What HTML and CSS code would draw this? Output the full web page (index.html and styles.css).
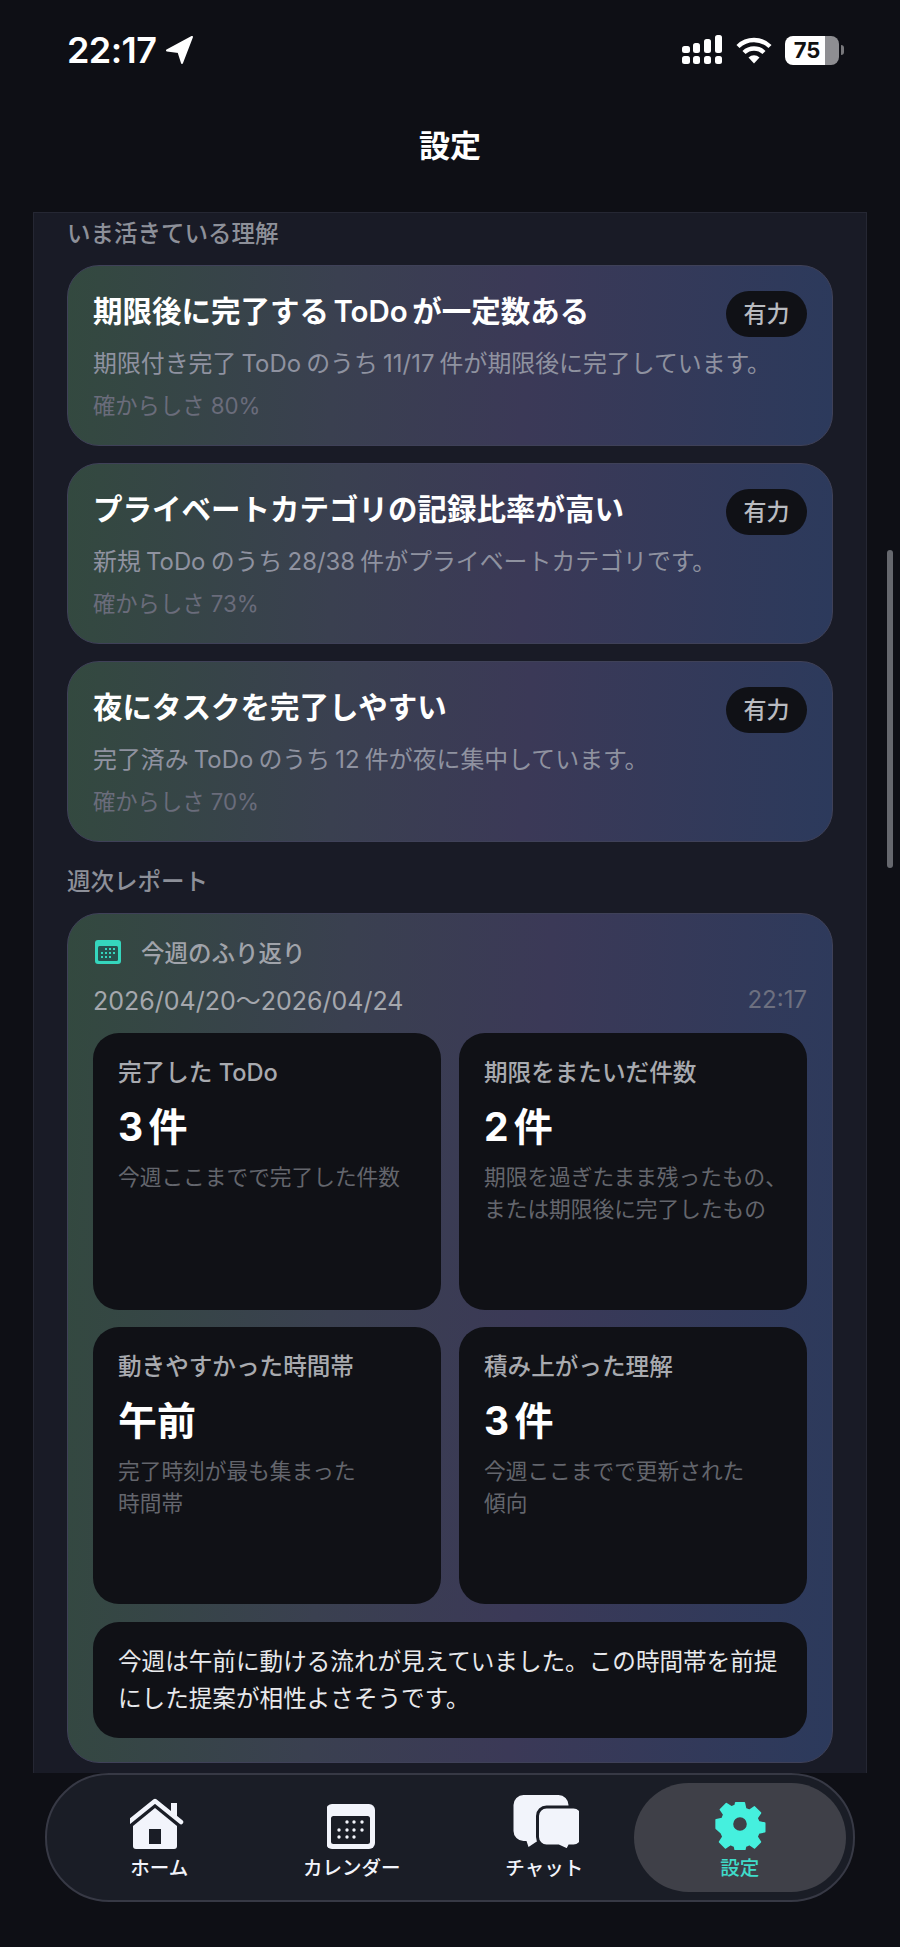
FILE: index.html
```html
<!DOCTYPE html>
<html lang="ja">
  <head>
    <meta charset="utf-8" />
    <title>設定</title>
    <link rel="stylesheet" href="styles.css">
  </head>
  <body>
    <div class="phone">
      <div class="status-bar">
        <div class="status-left">
          <span class="clock">22:17</span>
          <svg class="arrow" viewBox="0 0 30 30"><path d="M28 2 3 15.500l11.500 1.500L18 28z" fill="#fff" stroke="#fff" stroke-width="2" stroke-linejoin="round"/></svg>
        </div>
        <div class="status-right">
          <svg class="signal" viewBox="0 0 42 30" fill="#fff">
            <rect x="1" y="11" width="8" height="7" rx="2.5"/>
            <rect x="12" y="8" width="7" height="10" rx="2.5"/>
            <rect x="23" y="4" width="7" height="14" rx="2.5"/>
            <rect x="34" y="0" width="7" height="18" rx="2.5"/>
            <rect x="1" y="21" width="8" height="8" rx="2.5"/>
            <rect x="12" y="21" width="7" height="8" rx="2.5"/>
            <rect x="23" y="21" width="7" height="8" rx="2.5"/>
            <rect x="34" y="21" width="7" height="8" rx="2.5"/>
          </svg>
          <svg class="wifi" viewBox="0 0 36 28" fill="none" stroke="#fff" stroke-width="4.4">
            <path d="M2 10.5a23 23 0 0 1 32 0"/>
            <path d="M8 16.5a14.5 14.5 0 0 1 20 0"/>
            <path d="M18 27.5l-5.5-6a8 8 0 0 1 11 0z" fill="#fff" stroke="none"/>
          </svg>
          <div class="battery">
            <div class="battery-body"><span>75</span></div>
            <div class="battery-nub"></div>
          </div>
        </div>
      </div>

      <h1 class="page-title">設定</h1>

      <main class="panel">
        <h2 class="section-label">いま活きている理解</h2>

        <section class="card insight">
          <div class="insight-top">
            <h3>期限後に完了する ToDo が一定数ある</h3>
            <span class="chip">有力</span>
          </div>
          <p class="insight-body">期限付き完了 ToDo のうち 11/17 件が期限後に完了しています。</p>
          <p class="insight-meta">確からしさ 80%</p>
        </section>

        <section class="card insight">
          <div class="insight-top">
            <h3>プライベートカテゴリの記録比率が高い</h3>
            <span class="chip">有力</span>
          </div>
          <p class="insight-body">新規 ToDo のうち 28/38 件がプライベートカテゴリです。</p>
          <p class="insight-meta">確からしさ 73%</p>
        </section>

        <section class="card insight">
          <div class="insight-top">
            <h3>夜にタスクを完了しやすい</h3>
            <span class="chip">有力</span>
          </div>
          <p class="insight-body">完了済み ToDo のうち 12 件が夜に集中しています。</p>
          <p class="insight-meta">確からしさ 70%</p>
        </section>

        <h2 class="section-label report-label">週次レポート</h2>

        <section class="card report">
          <div class="report-head">
            <svg class="report-icon" viewBox="0 0 26 24">
              <rect width="26" height="24" rx="3" fill="#35d6bd"/>
              <rect x="3" y="6" width="20" height="15" rx="1.5" fill="#27524f"/>
              <g fill="#35d6bd">
                <rect x="10" y="8" width="2" height="2"/><rect x="14" y="8" width="2" height="2"/><rect x="18" y="8" width="2" height="2"/>
                <rect x="6" y="12" width="2" height="2"/><rect x="10" y="12" width="2" height="2"/><rect x="14" y="12" width="2" height="2"/><rect x="18" y="12" width="2" height="2"/>
                <rect x="6" y="16" width="2" height="2"/><rect x="10" y="16" width="2" height="2"/><rect x="14" y="16" width="2" height="2"/>
              </g>
            </svg>
            <span>今週のふり返り</span>
          </div>
          <div class="report-range">
            <span>2026/04/20～2026/04/24</span>
            <span class="report-time">22:17</span>
          </div>

          <div class="metrics">
            <div class="metric">
              <div class="metric-label">完了した ToDo</div>
              <div class="metric-value">3 件</div>
              <div class="metric-note">今週ここまでで完了した件数</div>
            </div>
            <div class="metric">
              <div class="metric-label">期限をまたいだ件数</div>
              <div class="metric-value">2 件</div>
              <div class="metric-note">期限を過ぎたまま残ったもの、<br>または期限後に完了したもの</div>
            </div>
            <div class="metric">
              <div class="metric-label">動きやすかった時間帯</div>
              <div class="metric-value">午前</div>
              <div class="metric-note">完了時刻が最も集まった<br>時間帯</div>
            </div>
            <div class="metric">
              <div class="metric-label">積み上がった理解</div>
              <div class="metric-value">3 件</div>
              <div class="metric-note">今週ここまでで更新された<br>傾向</div>
            </div>
          </div>

          <p class="summary">今週は午前に動ける流れが見えていました。この時間帯を前提にした提案が相性よさそうです。</p>
        </section>
      </main>

      <div class="scrollbar"></div>

      <nav class="tabbar">
        <a class="tab">
          <svg class="tab-icon" viewBox="4 0 58 52" width="58" height="52">
            <path d="M45 5h6v13h-6z" fill="#f2f4fb"/>
            <path d="M3 24 29 3l26 21" fill="none" stroke="#f2f4fb" stroke-width="4.5" stroke-linecap="round" stroke-linejoin="round"/>
            <path d="M29 10 51 28v20a3 3 0 0 1-3 3H10a3 3 0 0 1-3-3V28z" fill="#f2f4fb"/>
            <rect x="23" y="31" width="12" height="15" fill="#1a1d26"/>
          </svg>
          <span>ホーム</span>
        </a>
        <a class="tab">
          <svg class="tab-icon" viewBox="1 0 50 46" width="50" height="46">
            <rect width="49" height="45" rx="6" fill="#f2f4fb"/>
            <rect x="5" y="12" width="39" height="28" rx="2.5" fill="#1a1d26"/>
            <g fill="#f2f4fb">
              <circle cx="21" cy="18" r="1.7"/><circle cx="28" cy="18" r="1.7"/><circle cx="36" cy="18" r="1.7"/>
              <circle cx="13" cy="26" r="1.7"/><circle cx="21" cy="26" r="1.7"/><circle cx="28" cy="26" r="1.7"/><circle cx="36" cy="26" r="1.7"/>
              <circle cx="13" cy="33" r="1.7"/><circle cx="21" cy="33" r="1.7"/><circle cx="28" cy="33" r="1.7"/>
            </g>
          </svg>
          <span>カレンダー</span>
        </a>
        <a class="tab">
          <svg class="tab-icon" viewBox="-4.500 0 70 56" width="70" height="56">
            <path d="M10 1h35a10 10 0 0 1 10 10v26a10 10 0 0 1-10 10H24l-9 6-2-6h-3A10 10 0 0 1 0 37V11A10 10 0 0 1 10 1z" fill="#f2f4fb"/>
            <path d="M33 13h27a9 9 0 0 1 9 9v21a9 9 0 0 1-9 9h-4l-2 4-9-4H33a9 9 0 0 1-9-9V22a9 9 0 0 1 9-9z" fill="#f2f4fb" stroke="#1a1d26" stroke-width="3"/>
          </svg>
          <span>チャット</span>
        </a>
        <a class="tab tab-active">
          <svg class="tab-icon" viewBox="0 0 52 52" width="52" height="52">
            <path fill="#45f0de" stroke="#45f0de" stroke-width="2" stroke-linejoin="round" fill-rule="evenodd" d="M21 1h10l1.500 7 4.500 2 6-4 7 7-4 6 2 4.500 7 1.500v10l-7 1.500-2 4.500 4 6-7 7-6-4-4.500 2-1.500 7H21l-1.500-7-4.500-2-6 4-7-7 4-6-2-4.500L-2 31V21l7-1.500 2-4.500-4-6 7-7 6 4 4.500-2zM26 17a9 9 0 1 0 0 18 9 9 0 0 0 0-18z" transform="translate(3.900 3.900) scale(.85)"/>
          </svg>
          <span>設定</span>
        </a>
      </nav>
    </div>
  </body>
</html>
```

FILE: styles.css
```css
*,
*::before,
*::after {
  margin: 0;
  padding: 0;
  box-sizing: border-box;
}

html,
body {
  height: 100%;
}

body {
  background: #0e0f15;
  font-family: "Inter", "Noto Sans CJK JP", sans-serif;
  color: #fff;
  overflow: hidden;
}

.phone {
  position: relative;
  display: flex;
  flex-direction: column;
  height: 1947px;
  overflow: hidden;
}

.status-bar {
  display: flex;
  justify-content: space-between;
  align-items: center;
  height: 36px;
  margin-top: 32px;
  padding: 0 56px 0 67px;
}

.status-left {
  display: flex;
  align-items: center;
  gap: 8px;
}

.clock {
  font-size: 36px;
  font-weight: 600;
  letter-spacing: -0.6px;
}

.arrow {
  width: 30px;
  height: 30px;
}

.status-right {
  display: flex;
  align-items: center;
  gap: 13px;
}

.signal {
  width: 42px;
  height: 30px;
}

.wifi {
  width: 36px;
  height: 28px;
}

.battery {
  display: flex;
  align-items: center;
  gap: 2px;
}

.battery-body {
  width: 54px;
  height: 29px;
  border-radius: 8px;
  background: linear-gradient(to right, #fff 75%, #8e8e92 75%);
  color: #111;
  font-size: 22px;
  font-weight: 700;
  line-height: 29px;
  text-align: center;
}

.battery-body span {
  margin-right: 10px;
}

.battery-nub {
  width: 3px;
  height: 10px;
  border-radius: 0 3px 3px 0;
  background: #77777b;
}

.page-title {
  height: 46px;
  margin-top: 55px;
  font-size: 31px;
  font-weight: 600;
  line-height: 46px;
  text-align: center;
}

.panel {
  flex: 1;
  min-height: 0;
  margin: 43px 33px 0;
  padding: 5px 33px 0;
  overflow: hidden;
  background: #191b26;
  border: 1px solid #252733;
  border-bottom: 0;
}

.section-label {
  margin-bottom: 15px;
  color: #8d9099;
  font-size: 23.5px;
  font-weight: 500;
  line-height: 32px;
}

.report-label {
  margin-top: 24px;
}

.card {
  width: 766px;
  margin-bottom: 17px;
  padding: 25px;
  background: linear-gradient(93deg, #33493f 0%, #3a4050 35%, #3b3957 60%, #2c3a5c 100%);
  border: 1px solid #3f4158;
  border-radius: 32px;
}

.insight {
  height: 181px;
}

.insight-top {
  display: flex;
  justify-content: space-between;
  align-items: flex-start;
}

.insight-top h3 {
  font-size: 29.5px;
  font-weight: 600;
  line-height: 40px;
  word-spacing: -3px;
}

.chip {
  width: 81px;
  height: 46px;
  border-radius: 23px;
  background: #101116;
  color: #b9bbc0;
  font-size: 23px;
  font-weight: 500;
  line-height: 46px;
  text-align: center;
}

.insight-body {
  margin-top: 9px;
  color: #8f92a0;
  font-size: 23.9px;
  line-height: 36px;
  word-spacing: -1.5px;
}

.insight-meta {
  margin-top: 8px;
  color: #6a6c7b;
  font-size: 22.3px;
  line-height: 32px;
}

.report {
  height: 850px;
}

.report-head {
  display: flex;
  align-items: center;
  gap: 20px;
  height: 34px;
  margin-top: -4px;
  padding-left: 2px;
  color: #a0a3aa;
  font-size: 23.5px;
  font-weight: 500;
}

.report-icon {
  width: 26px;
  height: 24px;
}

.report-range {
  display: flex;
  justify-content: space-between;
  align-items: center;
  height: 36px;
  margin-top: 12px;
  color: #a5a7ad;
  font-size: 25px;
}

.report-time {
  color: #6d7080;
  font-size: 24px;
}

.metrics {
  display: grid;
  grid-template-columns: 1fr 1fr;
  grid-auto-rows: 277px;
  gap: 17px 18px;
  margin-top: 16px;
}

.metric {
  padding: 24px 15px 24px 25px;
  background: #101116;
  border-radius: 26px;
}

.metric-label {
  color: #a8aaaf;
  font-size: 23.6px;
  font-weight: 500;
  line-height: 32px;
}

.metric-value {
  margin-top: 12px;
  font-size: 39px;
  font-weight: 700;
  line-height: 52px;
  word-spacing: -4px;
}

.metric-note {
  margin-top: 8px;
  color: #64666d;
  font-size: 21.7px;
  line-height: 32px;
}

.summary {
  margin-top: 18px;
  padding: 21px 25px;
  background: #101116;
  border-radius: 26px;
  color: #e8e9ec;
  font-size: 23.6px;
  line-height: 37px;
}

.scrollbar {
  position: absolute;
  top: 550px;
  right: 7px;
  width: 6px;
  height: 318px;
  border-radius: 3px;
  background: #66686e;
}

.tabbar {
  display: grid;
  grid-template-columns: repeat(4, 1fr);
  height: 129px;
  margin: 0 45px 45px;
  padding: 8px 20px 8px 16px;
  background: #1a1d26;
  border: 2px solid #373945;
  border-radius: 64px;
}

.tab {
  display: flex;
  flex-direction: column;
  align-items: center;
  justify-content: flex-end;
  padding-bottom: 10px;
  color: #f2f4fb;
  font-size: 19.5px;
  font-weight: 500;
  line-height: 28px;
}

.tab-icon {
  margin-bottom: 4px;
}

.tab-active {
  margin: 0 -13px 0 -7px;
  background: #3f4048;
  border-radius: 56px;
  color: #3fdcca;
}
```
